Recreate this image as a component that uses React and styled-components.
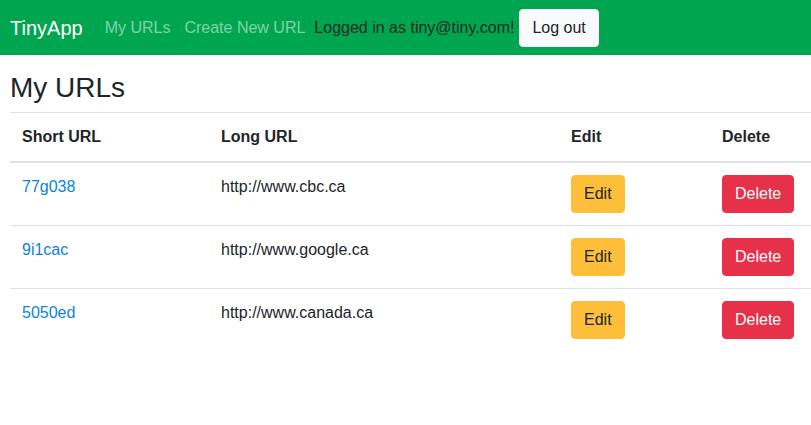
import styled, { createGlobalStyle } from 'styled-components';

const GlobalStyle = createGlobalStyle`
  body {
    margin: 0;
    font-family: "Liberation Sans", Arial, sans-serif;
    font-size: 16px;
    line-height: 1.5;
    color: #212529;
    background: #fff;
    overflow-x: hidden;
  }
`;

const urls = [
  { id: '77g038', long: 'http://www.cbc.ca' },
  { id: '9i1cac', long: 'http://www.google.ca' },
  { id: '5050ed', long: 'http://www.canada.ca' },
];

const Navbar = styled.nav`
  display: flex;
  align-items: center;
  height: 55px;
  padding: 0 10px;
  background: #00a64f;
  box-sizing: border-box;
`;

const Brand = styled.a`
  font-size: 20px;
  color: #fff;
  margin-right: 15px;
  text-decoration: none;
`;

const NavLink = styled.a`
  padding: 0 7px;
  color: rgba(255, 255, 255, 0.5);
  text-decoration: none;
`;

const UserText = styled.span`
  color: #1c2b24;
  margin: 0 5px 0 2px;
`;

const Button = styled.button`
  font-family: inherit;
  font-size: 16px;
  line-height: 24px;
  padding: 6px 12px;
  border: 1px solid ${(p) => p.$bg};
  border-radius: 4px;
  background: ${(p) => p.$bg};
  color: ${(p) => p.$fg};
  cursor: pointer;
`;

const Main = styled.main`
  padding-left: 10px;
`;

const Heading = styled.h2`
  font-size: 28px;
  font-weight: 500;
  line-height: 34px;
  margin: 16px 0 7px;
`;

const Table = styled.table`
  width: 100%;
  border-collapse: collapse;
  table-layout: fixed;
`;

const Th = styled.th`
  box-sizing: border-box;
  width: ${(p) => p.$w || 'auto'};
  text-align: left;
  padding: 12px;
  border-top: 1px solid #dee2e6;
  border-bottom: 2px solid #dee2e6;
  font-weight: 700;
`;

const Td = styled.td`
  padding: 12px;
  border-top: 1px solid #dee2e6;
  vertical-align: top;
  white-space: nowrap;
`;

const ShortLink = styled.a`
  color: #0a84d9;
  text-decoration: none;
`;

export default function App() {
  return (
    <>
      <GlobalStyle />
      <Navbar>
        <Brand href="#">TinyApp</Brand>
        <NavLink href="#">My URLs</NavLink>
        <NavLink href="#">Create New URL</NavLink>
        <UserText>Logged in as tiny@tiny.com!</UserText>
        <Button $bg="#f8f9fa" $fg="#212529">Log out</Button>
      </Navbar>
      <Main>
        <Heading>My URLs</Heading>
        <Table>
          <thead>
            <tr>
              <Th $w="199px">Short URL</Th>
              <Th $w="350px">Long URL</Th>
              <Th $w="151px">Edit</Th>
              <Th>Delete</Th>
            </tr>
          </thead>
          <tbody>
            {urls.map((u) => (
              <tr key={u.id}>
                <Td><ShortLink href="#">{u.id}</ShortLink></Td>
                <Td>{u.long}</Td>
                <Td><Button $bg="#fdbe3a" $fg="#212529">Edit</Button></Td>
                <Td><Button $bg="#e7304a" $fg="#fff">Delete</Button></Td>
              </tr>
            ))}
          </tbody>
        </Table>
      </Main>
    </>
  );
}
